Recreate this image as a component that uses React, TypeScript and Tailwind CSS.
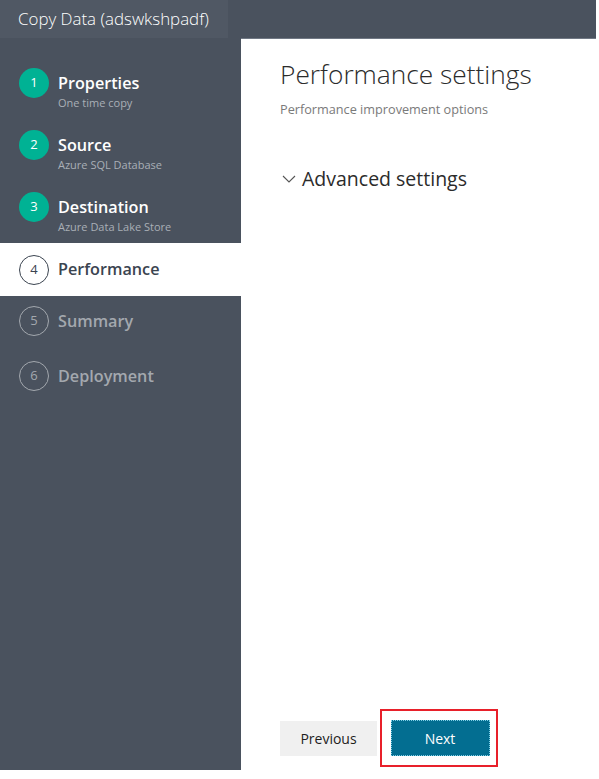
import React from "react";

const font = { fontFamily: '"Open Sans", "Noto Sans", sans-serif' };

function DoneStep({ n, title, sub, h }: { n: number; title: string; sub: string; h: string }) {
  return (
    <div className={`flex flex-col pl-[19px] ${h}`}>
      <div className="flex h-[30px] items-center">
        <div className="flex h-[30px] w-[30px] items-center justify-center rounded-full bg-[#00b294] text-[13px] text-white">
          {n}
        </div>
        <div className="ml-[9px] text-[16.2px] font-semibold leading-[20px] text-white">{title}</div>
      </div>
      <div className="ml-[39px] mt-[-2px] text-[11px] leading-[14px] text-[#a9afb6]">{sub}</div>
    </div>
  );
}

function PendingStep({ n, title, h }: { n: number; title: string; h: string }) {
  return (
    <div className={`flex items-center pl-[19px] ${h}`}>
      <div className="flex h-[30px] w-[30px] items-center justify-center rounded-full border-[1.5px] border-[#a3a8ae] text-[13px] text-[#a3a8ae]">
        {n}
      </div>
      <div className="ml-[9px] text-[16.2px] font-semibold text-[#a3a8ae]">{title}</div>
    </div>
  );
}

export default function App() {
  return (
    <div className="h-[779px] w-[599px] bg-white" style={font}>
      <div className="flex h-[770px] w-[596px] flex-col bg-[#4a525e]">
        <div className="flex h-[38px] shrink-0">
          <div className="flex w-[228px] items-center bg-[#505864] pl-[18px] text-[16.9px] font-light text-white">
            Copy Data (adswkshpadf)
          </div>
        </div>
        <div className="flex flex-1">
          <div className="flex w-[241px] shrink-0 flex-col pt-[30px]">
            <DoneStep n={1} title="Properties" sub="One time copy" h="h-[62px]" />
            <DoneStep n={2} title="Source" sub="Azure SQL Database" h="h-[62px]" />
            <DoneStep n={3} title="Destination" sub="Azure Data Lake Store" h="h-[51px]" />
            <div className="flex h-[53px] items-center bg-white pl-[19px]">
              <div className="flex h-[30px] w-[30px] items-center justify-center rounded-full border-[1.5px] border-[#3b4450] text-[13px] text-[#3b4450]">
                4
              </div>
              <div className="ml-[9px] text-[16.2px] font-semibold text-[#3b4450]">Performance</div>
            </div>
            <PendingStep n={5} title="Summary" h="h-[50px]" />
            <PendingStep n={6} title="Deployment" h="h-[60px]" />
          </div>
          <div className="flex flex-1 flex-col border-t border-[#707884] bg-white pl-[39px]">
            <div className="mt-[17px] text-[26.3px] font-light leading-[36px] text-[#2b2b2b]">
              Performance settings
            </div>
            <div className="mt-[8px] text-[12.7px] text-[#7a7a7a]">Performance improvement options</div>
            <div className="mt-[45px] flex items-center">
              <svg width="14" height="10" viewBox="0 0 14 10" className="ml-[2px]">
                <path d="M1 2 L7 8 L13 2" fill="none" stroke="#555" strokeWidth="1.1" />
              </svg>
              <div className="ml-[6px] text-[19.5px] text-[#2b2b2b]">Advanced settings</div>
            </div>
            <div className="flex-1" />
            <div className="mb-[3px] flex items-center">
              <div className="flex h-[35px] w-[97px] items-center justify-center bg-[#f0f0f0] text-[14px] text-[#1e1e1e]">
                Previous
              </div>
              <div className="ml-[3px] flex h-[58px] w-[118px] items-center border-[2.5px] border-[#e8202a] pl-[8.5px]">
                <div className="flex h-[36px] w-[99px] items-center justify-center border border-dotted border-[#7fd0e8] bg-[#036e91] text-[14px] text-white">
                  Next
                </div>
              </div>
            </div>
          </div>
        </div>
      </div>
    </div>
  );
}
